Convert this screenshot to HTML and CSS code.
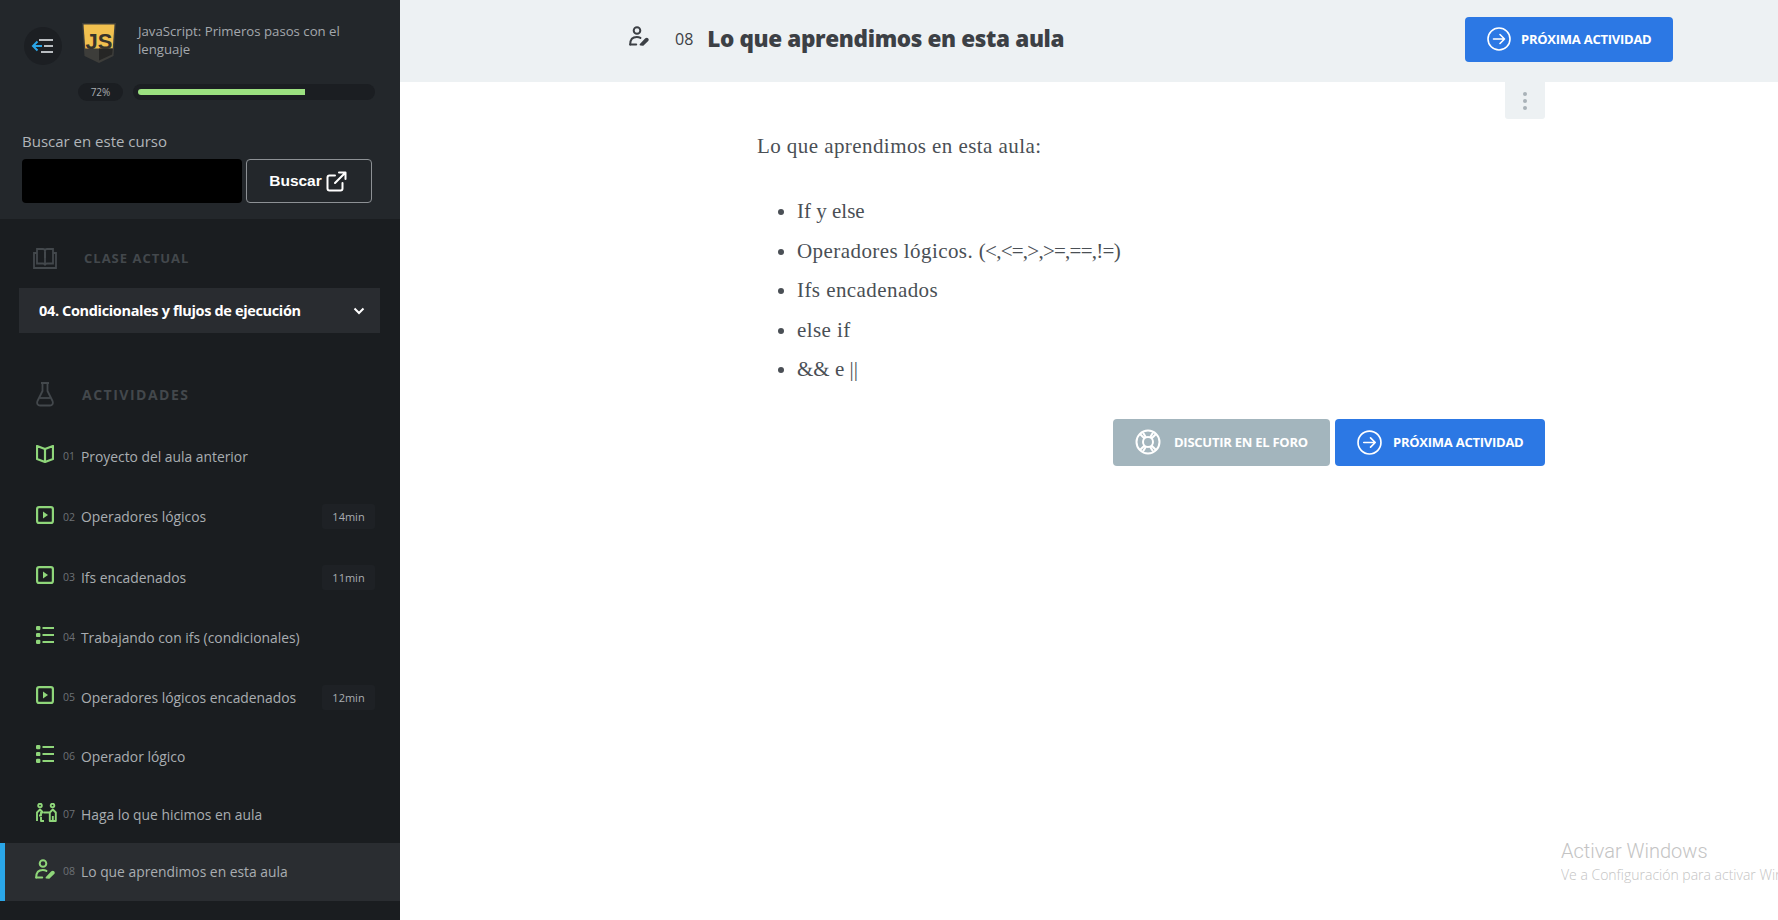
FILE: index.html
```html
<!DOCTYPE html>
<html lang="es">
<head>
<meta charset="utf-8">
<title>Lo que aprendimos en esta aula</title>
<link rel="stylesheet" href="styles.css">
</head>
<body>
<svg class="defs" width="0" height="0" aria-hidden="true">
  <symbol id="i-play" viewBox="0 0 18 18"><rect x="1.100" y="1.100" width="15.800" height="15.800" rx="2" fill="none" stroke="currentColor" stroke-width="2.200"/><path d="M7 5.500l5 3.500-5 3.500z" fill="currentColor"/></symbol>
  <symbol id="i-list" viewBox="0 0 18 18"><g fill="currentColor"><rect x="0" y="0" width="4.400" height="4.200" rx="1.200"/><rect x="0" y="6.900" width="4.400" height="4.200" rx="1.200"/><rect x="0" y="13.800" width="4.400" height="4.200" rx="1.200"/><rect x="6.500" y="1" width="11.500" height="2"/><rect x="6.500" y="8" width="11.500" height="2"/><rect x="6.500" y="15" width="11.500" height="2"/></g></symbol>
  <symbol id="i-learn" viewBox="0 0 20 20"><g fill="none" stroke="currentColor" stroke-width="2" stroke-linecap="round" stroke-linejoin="round"><circle cx="8" cy="4.500" r="3.300"/><path d="M1.200 18.400c0-5 2.600-7.400 6.600-7.400 1.400 0 2.600.3 3.600.9"/><path d="M1.200 18.600h6"/><path d="M11.600 18.600l5.400-5.600c1-.8 2.200.3 1.500 1.400l-4.600 4.400z"/></g></symbol>
  <symbol id="i-next" viewBox="0 0 24 24"><g fill="none" stroke="currentColor" stroke-width="1.600" stroke-linecap="round" stroke-linejoin="round"><circle cx="12" cy="12" r="11"/><path d="M6.500 12h11M13 7.500l4.500 4.500-4.500 4.500"/></g></symbol>
</svg>

<aside class="sidebar">
  <section class="course">
    <div class="course-head">
      <span class="back">
        <svg width="24" height="16" viewBox="0 0 24 16"><g fill="none" stroke-width="2"><path d="M8 2h14M10 14h12" stroke="#b9bdc1"/><path d="M11 8H2M6.500 3.500L2 8l4.500 4.500" stroke="#2aa6e8"/><path d="M13 8h9" stroke="#b9bdc1"/></g></svg>
      </span>
      <svg class="logo" width="36" height="42" viewBox="0 0 36 42">
        <path d="M1 1h34l-2.500 33L18 41 3.500 34z" fill="#3d3d3a"/>
        <path d="M2.500 2.500h31l-1.800 24H4.300z" fill="#f1c04f"/>
        <path d="M21 26.500h10.700l-.6 6L18 38.500V26.500z" fill="#262625"/>
        <text x="18" y="27" class="logo-text" text-anchor="middle">JS</text>
      </svg>
      <p class="course-title">JavaScript: Primeros pasos con el lenguaje</p>
    </div>
    <div class="progress">
      <span class="pct">72%</span>
      <span class="track"><span class="fill"></span></span>
    </div>
    <label class="search-label" for="q">Buscar en este curso</label>
    <div class="search">
      <input class="search-input" id="q" type="text">
      <button class="search-btn" type="button">Buscar
        <svg width="21" height="21" viewBox="0 0 21 21"><g fill="none" stroke="#fff" stroke-width="2" stroke-linecap="round" stroke-linejoin="round"><path d="M9 4.500H3.500a2 2 0 0 0-2 2v11a2 2 0 0 0 2 2h11a2 2 0 0 0 2-2V12"/><path d="M9 12L19.500 1.500M13 1.500h6.500V8"/></g></svg>
      </button>
    </div>
  </section>

  <section class="nav">
    <div class="nav-head head-class">
      <svg class="nav-head-icon" width="24" height="21" viewBox="0 0 24 21"><g fill="none" stroke="#43484c" stroke-width="1.800"><path d="M4 5H1v15h22V5h-3"/><path d="M4 1h6c1.300 0 2 .8 2 2v14.500c0-1.200-.7-2-2-2H4zM20 1h-6c-1.300 0-2 .8-2 2v14.500c0-1.200.7-2 2-2h6z"/></g><path d="M12 4v6" stroke="#43484c" stroke-width="2"/></svg>
      <span>CLASE ACTUAL</span>
    </div>
    <div class="lesson">
      <span>04. Condicionales y flujos de ejecución</span>
      <svg width="12" height="8" viewBox="0 0 12 8"><path d="M1.500 1.500L6 6l4.500-4.500" fill="none" stroke="#fff" stroke-width="2"/></svg>
    </div>
    <div class="nav-head head-act">
      <svg class="nav-head-icon" width="18" height="25" viewBox="0 0 18 25"><g fill="none" stroke="#43484c" stroke-width="1.800" stroke-linejoin="round"><path d="M5 1h8M6.500 1v8L1.500 19c-1 2.500.3 4.500 2.500 4.500h10c2.200 0 3.500-2 2.500-4.500L11.500 9V1"/><path d="M3.500 16h11"/></g></svg>
      <span>ACTIVIDADES</span>
    </div>
    <ul class="rows">
      <li class="row"><svg class="ic" width="18" height="18" viewBox="0 0 18 18"><g fill="none" stroke="currentColor" stroke-width="2.200" stroke-linejoin="round"><path d="M9 4L1 1v13l8 3 8-3V1z"/><path d="M9 4v13"/></g></svg><span class="num">01</span><span class="name">Proyecto del aula anterior</span></li>
      <li class="row"><svg class="ic" width="18" height="18"><use href="#i-play"/></svg><span class="num">02</span><span class="name">Operadores lógicos</span><span class="dur">14min</span></li>
      <li class="row"><svg class="ic" width="18" height="18"><use href="#i-play"/></svg><span class="num">03</span><span class="name">Ifs encadenados</span><span class="dur">11min</span></li>
      <li class="row"><svg class="ic" width="18" height="18"><use href="#i-list"/></svg><span class="num">04</span><span class="name">Trabajando con ifs (condicionales)</span></li>
      <li class="row"><svg class="ic" width="18" height="18"><use href="#i-play"/></svg><span class="num">05</span><span class="name">Operadores lógicos encadenados</span><span class="dur">12min</span></li>
      <li class="row"><svg class="ic" width="18" height="18"><use href="#i-list"/></svg><span class="num">06</span><span class="name">Operador lógico</span></li>
      <li class="row"><svg class="ic ic-wide" width="21" height="19" viewBox="0 0 21 19"><g fill="none" stroke="currentColor" stroke-width="1.900" stroke-linejoin="round"><circle cx="4" cy="2.500" r="1.800"/><circle cx="16.500" cy="2.500" r="1.800"/><path d="M1 18V9.500L4 6.500l3 3H5v3H3M8 18H5v-4"/><path d="M19.800 18V9.500l-3-3-3 3V18zM16.800 18v-5M8 9.500h5.500"/></g></svg><span class="num">07</span><span class="name">Haga lo que hicimos en aula</span></li>
      <li class="row row-active"><svg class="ic" width="20" height="20"><use href="#i-learn"/></svg><span class="num">08</span><span class="name">Lo que aprendimos en esta aula</span></li>
    </ul>
  </section>
</aside>

<main class="main">
  <header class="topbar">
    <div class="topbar-title">
      <svg class="top-icon" width="22" height="20"><use href="#i-learn"/></svg>
      <span class="top-num">08</span>
      <h1 class="top-h">Lo que aprendimos en esta aula</h1>
    </div>
    <a class="btn btn-next btn-top"><svg width="24" height="24"><use href="#i-next"/></svg>PRÓXIMA ACTIVIDAD</a>
  </header>
  <div class="content">
    <button class="kebab" type="button" aria-label="Opciones"><i></i><i></i><i></i></button>
    <p class="lead">Lo que aprendimos en esta aula:</p>
    <ul class="points">
      <li class="tight">If y else</li>
      <li>Operadores lógicos. <span class="ops">(&lt;,&lt;=,&gt;,&gt;=,==,!=)</span></li>
      <li>Ifs encadenados</li>
      <li>else if</li>
      <li class="tight">&amp;&amp; e ||</li>
    </ul>
    <div class="actions">
      <a class="btn btn-forum"><svg width="26" height="26" viewBox="0 0 26 26"><g fill="none" stroke="currentColor" stroke-width="2"><circle cx="13" cy="13" r="11.500"/><circle cx="13" cy="13" r="5"/><path d="M5 5l4.500 4.500M21 5l-4.500 4.500M5 21l4.500-4.500M21 21l-4.500-4.500M8 3.500l3 5M18 3.500l-3 5M8 22.500l3-5M18 22.500l-3-5"/></g></svg>DISCUTIR EN EL FORO</a>
      <a class="btn btn-next btn-low"><svg width="25" height="25"><use href="#i-next"/></svg>PRÓXIMA ACTIVIDAD</a>
    </div>
  </div>
  <div class="watermark">
    <div class="wm-a">Activar Windows</div>
    <div class="wm-b">Ve a Configuración para activar Windows</div>
  </div>
</main>
</body>
</html>
```

FILE: styles.css
```css
* { box-sizing: border-box; }
html, body { height: 100%; }
body {
  margin: 0;
  display: flex;
  height: 920px;
  overflow: hidden;
  background: #fff;
  font-family: "Open Sans", sans-serif;
}
.defs { position: absolute; }

/* Sidebar */
.sidebar {
  width: 400px;
  flex: none;
  background: #1a1d20;
  display: flex;
  flex-direction: column;
}
.course {
  height: 219px;
  background: #23272b;
  padding: 22px 25px 0 22px;
}
.course-head { display: flex; align-items: flex-start; }
.back {
  width: 38px;
  height: 38px;
  margin-top: 5px;
  margin-left: 2px;
  border-radius: 50%;
  background: #1c1f23;
  display: flex;
  align-items: center;
  justify-content: center;
  flex: none;
}
.logo { margin-left: 19px; flex: none; }
.logo-text { font: 700 22px "Liberation Sans", sans-serif; fill: #37342c; }
.course-title {
  margin: 0 0 0 21px;
  width: 228px;
  font-size: 13.200px;
  line-height: 18px;
  color: #a3a8ad;
}
.progress { display: flex; align-items: center; margin: 18px 0 0 56px; height: 18px; }
.pct {
  width: 45px;
  height: 18px;
  border-radius: 9px;
  background: #1b1e22;
  color: #a9adb1;
  font-size: 10px;
  line-height: 18px;
  text-align: center;
}
.track {
  margin-left: 10px;
  width: 242px;
  height: 16px;
  border-radius: 8px;
  background: #1b1e22;
  padding: 5px;
  display: block;
}
.fill { display: block; width: 167px; height: 6px; background: #9be080; border-radius: 3px 0 0 3px; }
.search-label {
  display: block;
  margin-top: 30px;
  font-size: 15px;
  line-height: 20px;
  color: #b1b5b9;
}
.search { display: flex; gap: 4px; margin-top: 8px; }
.search-input {
  width: 220px;
  height: 44px;
  border: 0;
  border-radius: 4px;
  background: #000;
}
.search-btn {
  width: 126px;
  height: 44px;
  border: 1px solid #8d9195;
  border-radius: 4px;
  background: transparent;
  color: #fff;
  font: 700 15.500px "Liberation Sans", sans-serif;
  display: flex;
  align-items: center;
  justify-content: center;
  gap: 4px;
  padding: 0 2px 0 0;
}
.nav { flex: 1; }
.nav-head { display: flex; align-items: center; font-weight: 700; color: #43484c; }
.head-class {
  margin-top: 28px;
  height: 22px;
  padding-left: 33px;
  font-size: 13px;
  letter-spacing: 1px;
  gap: 27px;
}
.lesson {
  margin: 19px 20px 0 19px;
  height: 45px;
  padding: 0 15px 0 20px;
  background: #292c30;
  color: #fff;
  font-size: 14.500px;
  font-weight: 700;
  letter-spacing: -0.350px;
  display: flex;
  align-items: center;
  justify-content: space-between;
}
.head-act {
  margin-top: 49px;
  height: 25px;
  padding-left: 36px;
  font-size: 14px;
  letter-spacing: 1.500px;
  gap: 28px;
}
.rows {
  list-style: none;
  margin: 19px 0 0;
  padding: 0;
  display: grid;
  grid-template-rows: 60px 61px 60px 60px 60px 58px 58px 58px;
}
.row {
  display: flex;
  align-items: center;
  padding: 0 25px 0 36px;
  color: #a9adb1;
  font-size: 13.850px;
}
.ic { color: #8fd67a; flex: none; margin-right: 9px; margin-top: -4px; }
.ic-wide { margin-right: 6px; }
.num { width: 18px; flex: none; font-size: 10.500px; color: #6d7175; }
.name { flex: 1; white-space: nowrap; }
.dur {
  width: 53px;
  height: 25px;
  border-radius: 3px;
  background: #1e2125;
  font-size: 11px;
  line-height: 25px;
  text-align: center;
}
.row-active {
  background: #2a2d31;
  border-left: 5px solid #2aa6e8;
  padding-left: 31px;
  padding-bottom: 2px;
}
.row-active .ic { margin-right: 8px; margin-left: -1px; }

/* Main */
.main { flex: 1; min-width: 0; position: relative; }
.topbar {
  height: 82px;
  background: #edf1f3;
  padding: 0 105px 4px 228px;
  display: flex;
  align-items: center;
  justify-content: space-between;
}
.topbar-title { display: flex; align-items: center; color: #3c4045; }
.top-icon { color: #3c4045; margin-top: -6px; }
.top-num { margin-left: 25px; font-size: 16px; }
.top-h { margin: 0 0 0 14px; font-size: 22.500px; font-weight: 800; letter-spacing: -0.360px; line-height: 32px; }
.btn {
  display: flex;
  align-items: center;
  border-radius: 4px;
  color: #fff;
  font-size: 13px;
  font-weight: 700;
  letter-spacing: -0.250px;
  white-space: nowrap;
}
.btn-next { background: #2c78e4; }
.btn-top { width: 208px; height: 45px; padding-left: 22px; gap: 10px; }
.btn-low { width: 210px; height: 47px; padding-left: 22px; gap: 11px; }
.btn-forum { width: 217px; height: 47px; padding-left: 22px; gap: 13px; background: #a3b5bd; }
.content { width: 788px; margin-left: 357px; position: relative; padding-top: 51px; }
.kebab {
  position: absolute;
  top: 0;
  right: 0;
  width: 40px;
  height: 37px;
  border: 0;
  border-radius: 0 0 3px 3px;
  background: #edf1f3;
  padding: 0;
  display: flex;
  flex-direction: column;
  align-items: center;
  justify-content: center;
  gap: 3px;
}
.kebab i { width: 4px; height: 4px; border-radius: 50%; background: #a9b2b8; }
.lead, .points {
  font-family: "Liberation Serif", serif;
  font-size: 21px;
  letter-spacing: 0.430px;
  color: #4a4f55;
}
.lead { margin: 0; line-height: 26px; }
.points { margin: 39px 0 0; padding-left: 40px; }
.points li { height: 39.500px; line-height: 26px; }
.points .tight { letter-spacing: 0; }
.ops { letter-spacing: -0.750px; }
.actions { display: flex; justify-content: flex-end; gap: 5px; margin-top: 23px; }
.watermark {
  position: absolute;
  left: 1161px;
  top: 838px;
  width: 217px;
  overflow: hidden;
  white-space: nowrap;
  color: #c4c4c4;
  font-family: Roboto, sans-serif;
  font-weight: 300;
}
.wm-a { font-size: 20px; line-height: 27px; }
.wm-b { font-family: "Open Sans", sans-serif; font-size: 14px; line-height: 20px; }
```
